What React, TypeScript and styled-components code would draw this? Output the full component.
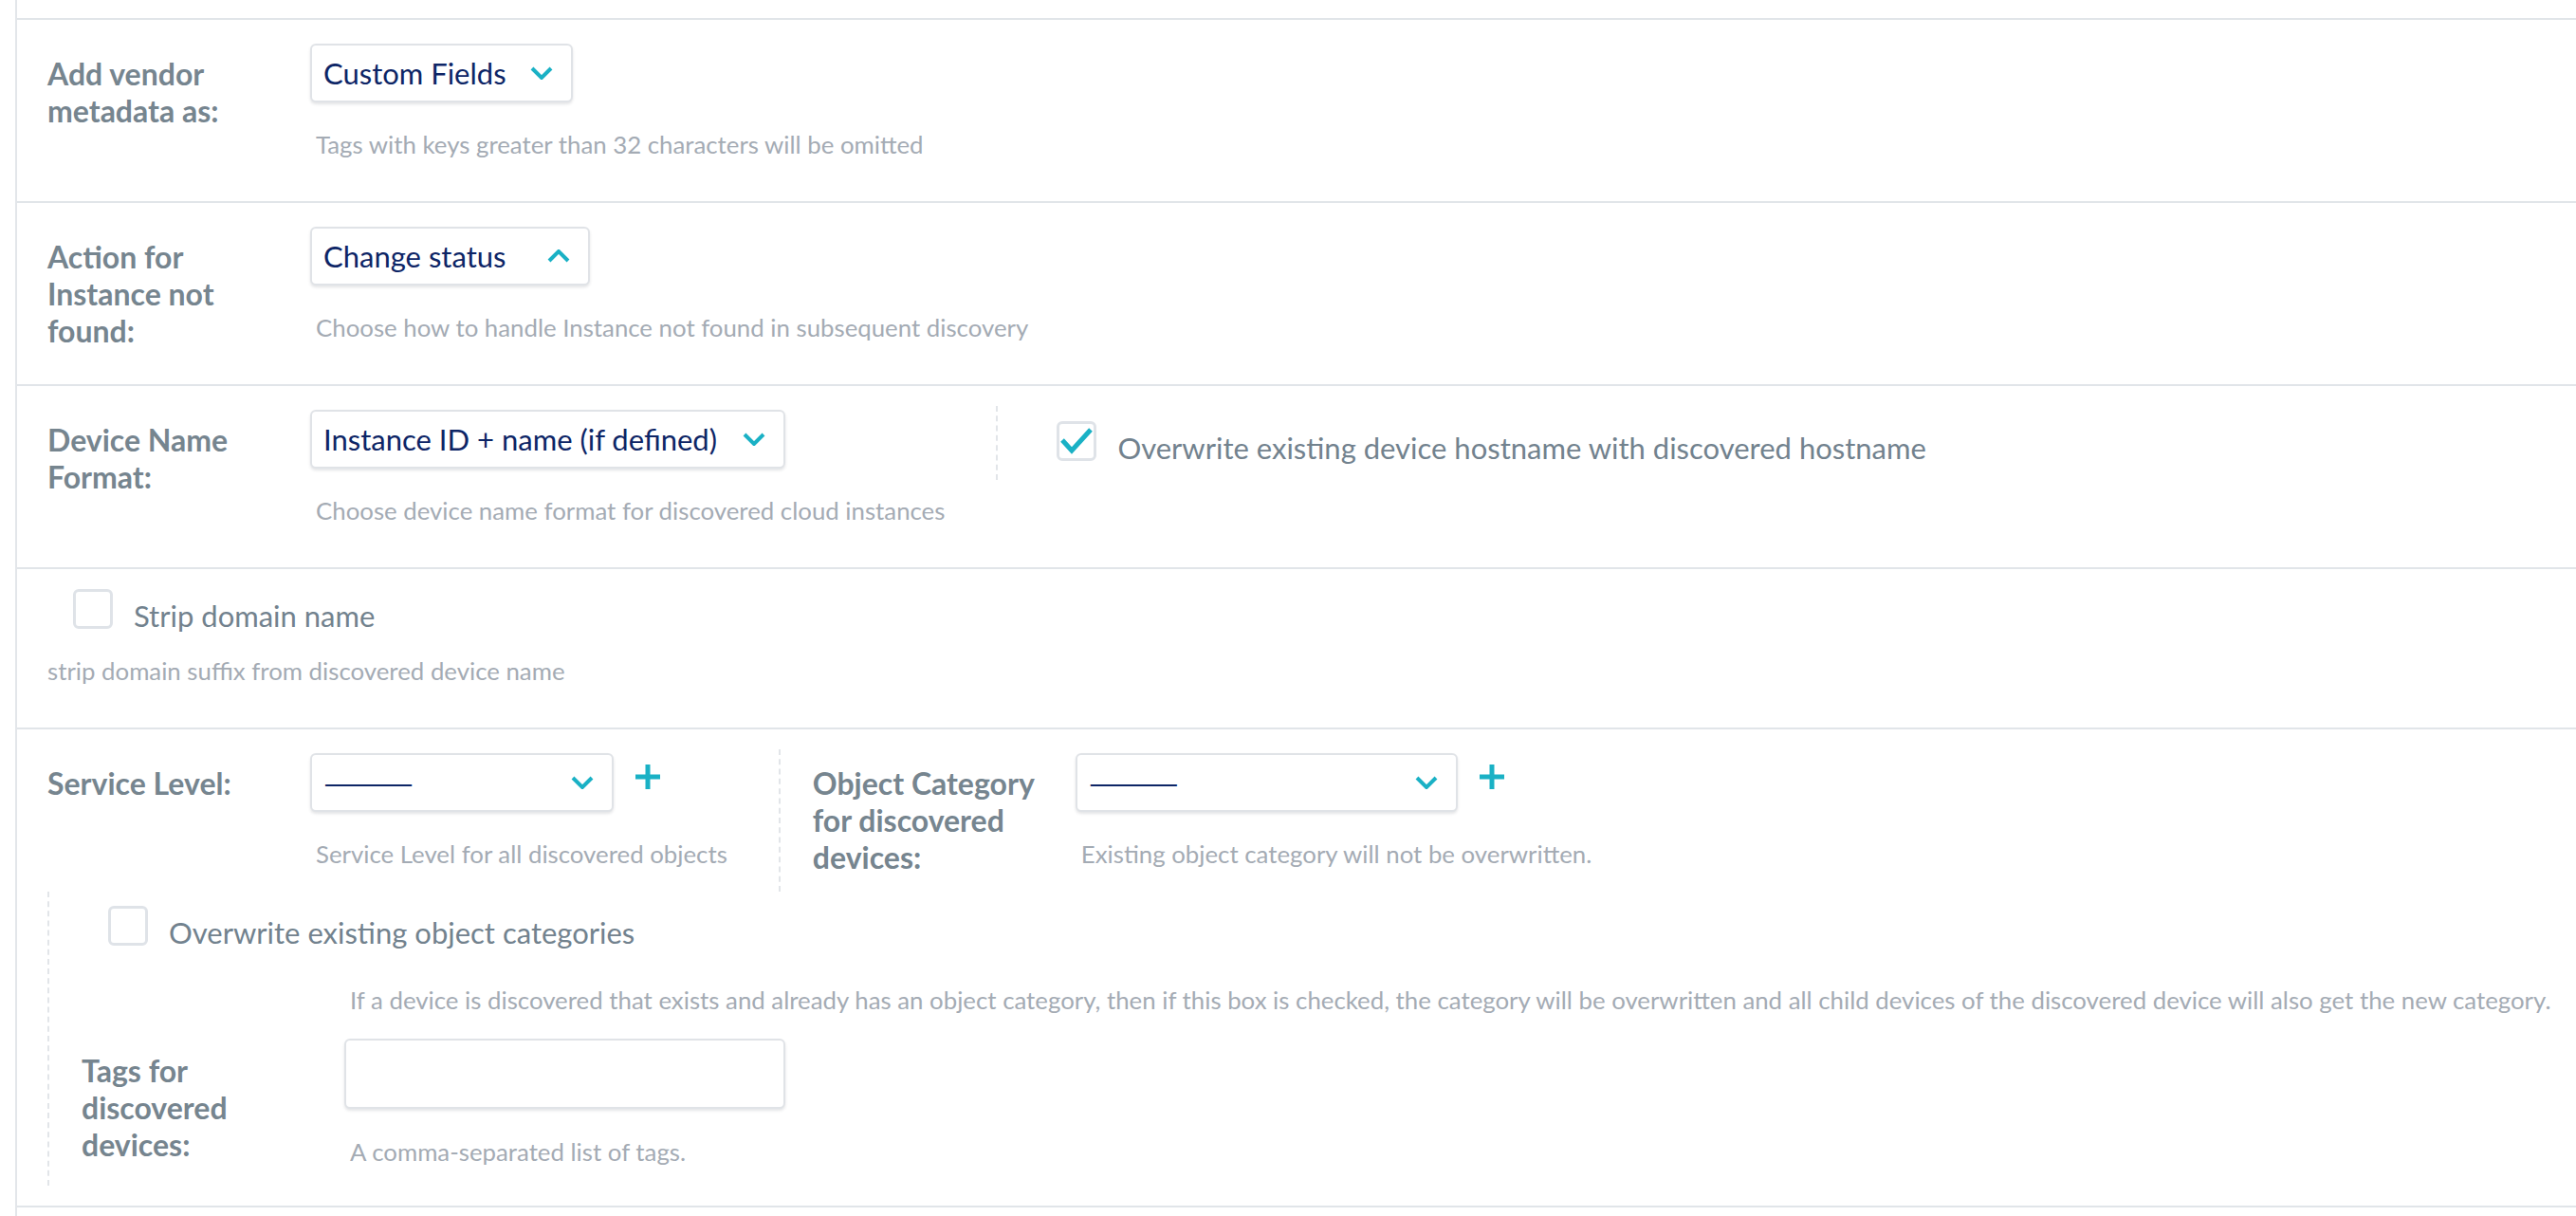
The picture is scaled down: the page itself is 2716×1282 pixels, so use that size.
import React from "react";
import styled, { createGlobalStyle } from "styled-components";

const TEAL = "#1ab1c5";

const GlobalStyle = createGlobalStyle`
  html, body {
    margin: 0;
    padding: 0;
    background: #ffffff;
  }
  body {
    font-family: Lato, "Noto Sans", sans-serif;
  }
  * {
    box-sizing: border-box;
  }
`;

const ChevronIcon = ({ up }: { up?: boolean }) => (
  <svg width="24" height="14" viewBox="0 0 24 14" fill="none">
    <polyline
      points={up ? "2,12 12,2 22,12" : "2,2 12,12 22,2"}
      stroke={TEAL}
      strokeWidth="4"
    />
  </svg>
);

const PlusIcon = () => (
  <svg width="28" height="28" viewBox="0 0 28 28" fill="none">
    <path d="M14 1 V27 M1 14 H27" stroke={TEAL} strokeWidth="5" />
  </svg>
);

const CheckIcon = () => (
  <svg width="42" height="42" viewBox="0 0 42 42" fill="none">
    <polyline points="6,20 16,31 36,9" stroke={TEAL} strokeWidth="5" />
  </svg>
);

interface SelectProps {
  value: string;
  up?: boolean;
  width: number;
  empty?: boolean;
}

const Select = ({ value, up, width, empty }: SelectProps) => (
  <SelectBox $width={width}>
    <SelectValue $empty={empty}>{value}</SelectValue>
    <ChevronIcon up={up} />
  </SelectBox>
);

interface CheckProps {
  label: string;
  checked?: boolean;
  indent?: number;
  top?: number;
}

const Checkbox = ({ label, checked, indent, top }: CheckProps) => (
  <CheckRow $indent={indent} $top={top}>
    <Box>{checked && <CheckIcon />}</Box>
    <CheckText>{label}</CheckText>
  </CheckRow>
);

const App = () => {
  return (
    <>
      <GlobalStyle />
      <Panel>
        <TopStrip />

        <Row>
          <Field>
            <Label>Add vendor metadata as:</Label>
            <Control>
              <Select value="Custom Fields" width={277} />
              <Help>Tags with keys greater than 32 characters will be omitted</Help>
            </Control>
          </Field>
        </Row>

        <Row>
          <Field>
            <Label>Action for Instance not found:</Label>
            <Control>
              <Select value="Change status" up width={295} />
              <Help>Choose how to handle Instance not found in subsequent discovery</Help>
            </Control>
          </Field>
        </Row>

        <Row>
          <Columns>
            <LeftColumn>
              <Field>
                <Label>Device Name Format:</Label>
                <Control>
                  <Select value="Instance ID + name (if defined)" width={501} />
                  <Help>Choose device name format for discovered cloud instances</Help>
                </Control>
              </Field>
            </LeftColumn>
            <DividedColumn>
              <Checkbox
                label="Overwrite existing device hostname with discovered hostname"
                checked
                top={16}
              />
            </DividedColumn>
          </Columns>
        </Row>

        <Row>
          <Checkbox label="Strip domain name" indent={27} />
          <Help $flush $gap={20}>
            strip domain suffix from discovered device name
          </Help>
        </Row>

        <Row $bottom={21}>
          <Columns>
            <LeftColumn>
              <Field>
                <Label>Service Level:</Label>
                <Control>
                  <SelectLine>
                    <Select value="—————" width={320} empty />
                    <AddButton>
                      <PlusIcon />
                    </AddButton>
                  </SelectLine>
                  <Help>Service Level for all discovered objects</Help>
                </Control>
              </Field>
            </LeftColumn>
            <DividedColumn $bottom={22}>
              <Field>
                <Label>Object Category for discovered devices:</Label>
                <Control>
                  <SelectLine>
                    <Select value="—————" width={403} empty />
                    <AddButton>
                      <PlusIcon />
                    </AddButton>
                  </SelectLine>
                  <Help>Existing object category will not be overwritten.</Help>
                </Control>
              </Field>
            </DividedColumn>
          </Columns>

          <Nested>
            <Checkbox label="Overwrite existing object categories" />
            <Field $top={0}>
              <span />
              <Help $gap={33}>
                If a device is discovered that exists and already has an object
                category, then if this box is checked, the category will be
                overwritten and all child devices of the discovered device will
                also get the new category.
              </Help>
            </Field>
            <Field $top={23}>
              <Label $offset={14}>Tags for discovered devices:</Label>
              <Control>
                <TextInput type="text" />
                <Help $gap={27}>A comma-separated list of tags.</Help>
              </Control>
            </Field>
          </Nested>
        </Row>
      </Panel>
    </>
  );
};

export default App;

const Panel = styled.div`
  margin-left: 16px;
  min-height: 1282px;
  border-left: 2px solid #e3e6ea;
  background: #ffffff;
  overflow: hidden;
`;

const TopStrip = styled.div`
  height: 21px;
  border-bottom: 2px solid #e1e5e9;
`;

const Row = styled.div<{ $bottom?: number }>`
  padding: 21px 32px ${(p) => p.$bottom ?? 42}px;
  border-bottom: 2px solid #e1e5e9;
`;

const Columns = styled.div`
  display: flex;
  align-items: flex-start;
`;

const LeftColumn = styled.div`
  padding-right: 54px;
`;

const DividedColumn = styled.div<{ $bottom?: number }>`
  padding: 0 0 ${(p) => p.$bottom ?? 14}px 34px;
  border-left: 2px dashed #e2e5e9;
`;

const Nested = styled.div`
  padding: 15px 0 18px 34px;
  border-left: 2px dashed #e2e5e9;
`;

const Field = styled.div<{ $top?: number }>`
  display: grid;
  grid-template-columns: 277px auto;
  padding-top: ${(p) => p.$top ?? 4}px;
`;

const Label = styled.div<{ $offset?: number }>`
  width: 245px;
  margin-top: ${(p) => p.$offset ?? 12}px;
  margin-bottom: -12px;
  font-size: 32px;
  font-weight: 700;
  line-height: 39px;
  color: #76858f;
`;

const Control = styled.div`
  display: flex;
  flex-direction: column;
  align-items: flex-start;
`;

const SelectLine = styled.div`
  display: flex;
  align-items: flex-start;
  gap: 22px;
`;

const SelectBox = styled.div<{ $width: number }>`
  display: flex;
  align-items: center;
  justify-content: space-between;
  width: ${(p) => p.$width}px;
  height: 62px;
  padding: 0 19px 0 12px;
  border: 2px solid #e0e3e7;
  border-radius: 6px;
  background: #ffffff;
  box-shadow: 0 2px 3px rgba(30, 40, 60, 0.12);
`;

const SelectValue = styled.span<{ $empty?: boolean }>`
  font-size: 31px;
  color: #0d2566;
  white-space: nowrap;
  letter-spacing: ${(p) => (p.$empty ? "-7px" : "0")};
`;

const AddButton = styled.div`
  margin-top: 11px;
  width: 28px;
  height: 28px;
  display: flex;
`;

const Help = styled.div<{ $flush?: boolean; $gap?: number }>`
  margin-top: ${(p) => p.$gap ?? 26}px;
  padding-left: ${(p) => (p.$flush ? 0 : 6)}px;
  font-size: 25.8px;
  line-height: 36px;
  color: #a4abb4;
  white-space: nowrap;
`;

const CheckRow = styled.div<{ $indent?: number; $top?: number }>`
  display: flex;
  align-items: flex-start;
  gap: 22px;
  margin-left: ${(p) => p.$indent ?? 28}px;
  padding-top: ${(p) => p.$top ?? 0}px;
`;

const Box = styled.div`
  flex: none;
  width: 42px;
  height: 42px;
  border: 3px solid #dfe3e8;
  border-radius: 6px;
  background: #ffffff;
  display: flex;
  align-items: center;
  justify-content: center;

  svg {
    margin: -3px;
  }
`;

const CheckText = styled.div`
  margin-top: 8px;
  font-size: 31px;
  line-height: 40px;
  color: #72828e;
  white-space: nowrap;
`;

const TextInput = styled.input`
  width: 465px;
  height: 74px;
  border: 2px solid #e0e3e7;
  border-radius: 6px;
  box-shadow: 0 2px 3px rgba(30, 40, 60, 0.12);
  outline: none;
  font-size: 28px;
`;
